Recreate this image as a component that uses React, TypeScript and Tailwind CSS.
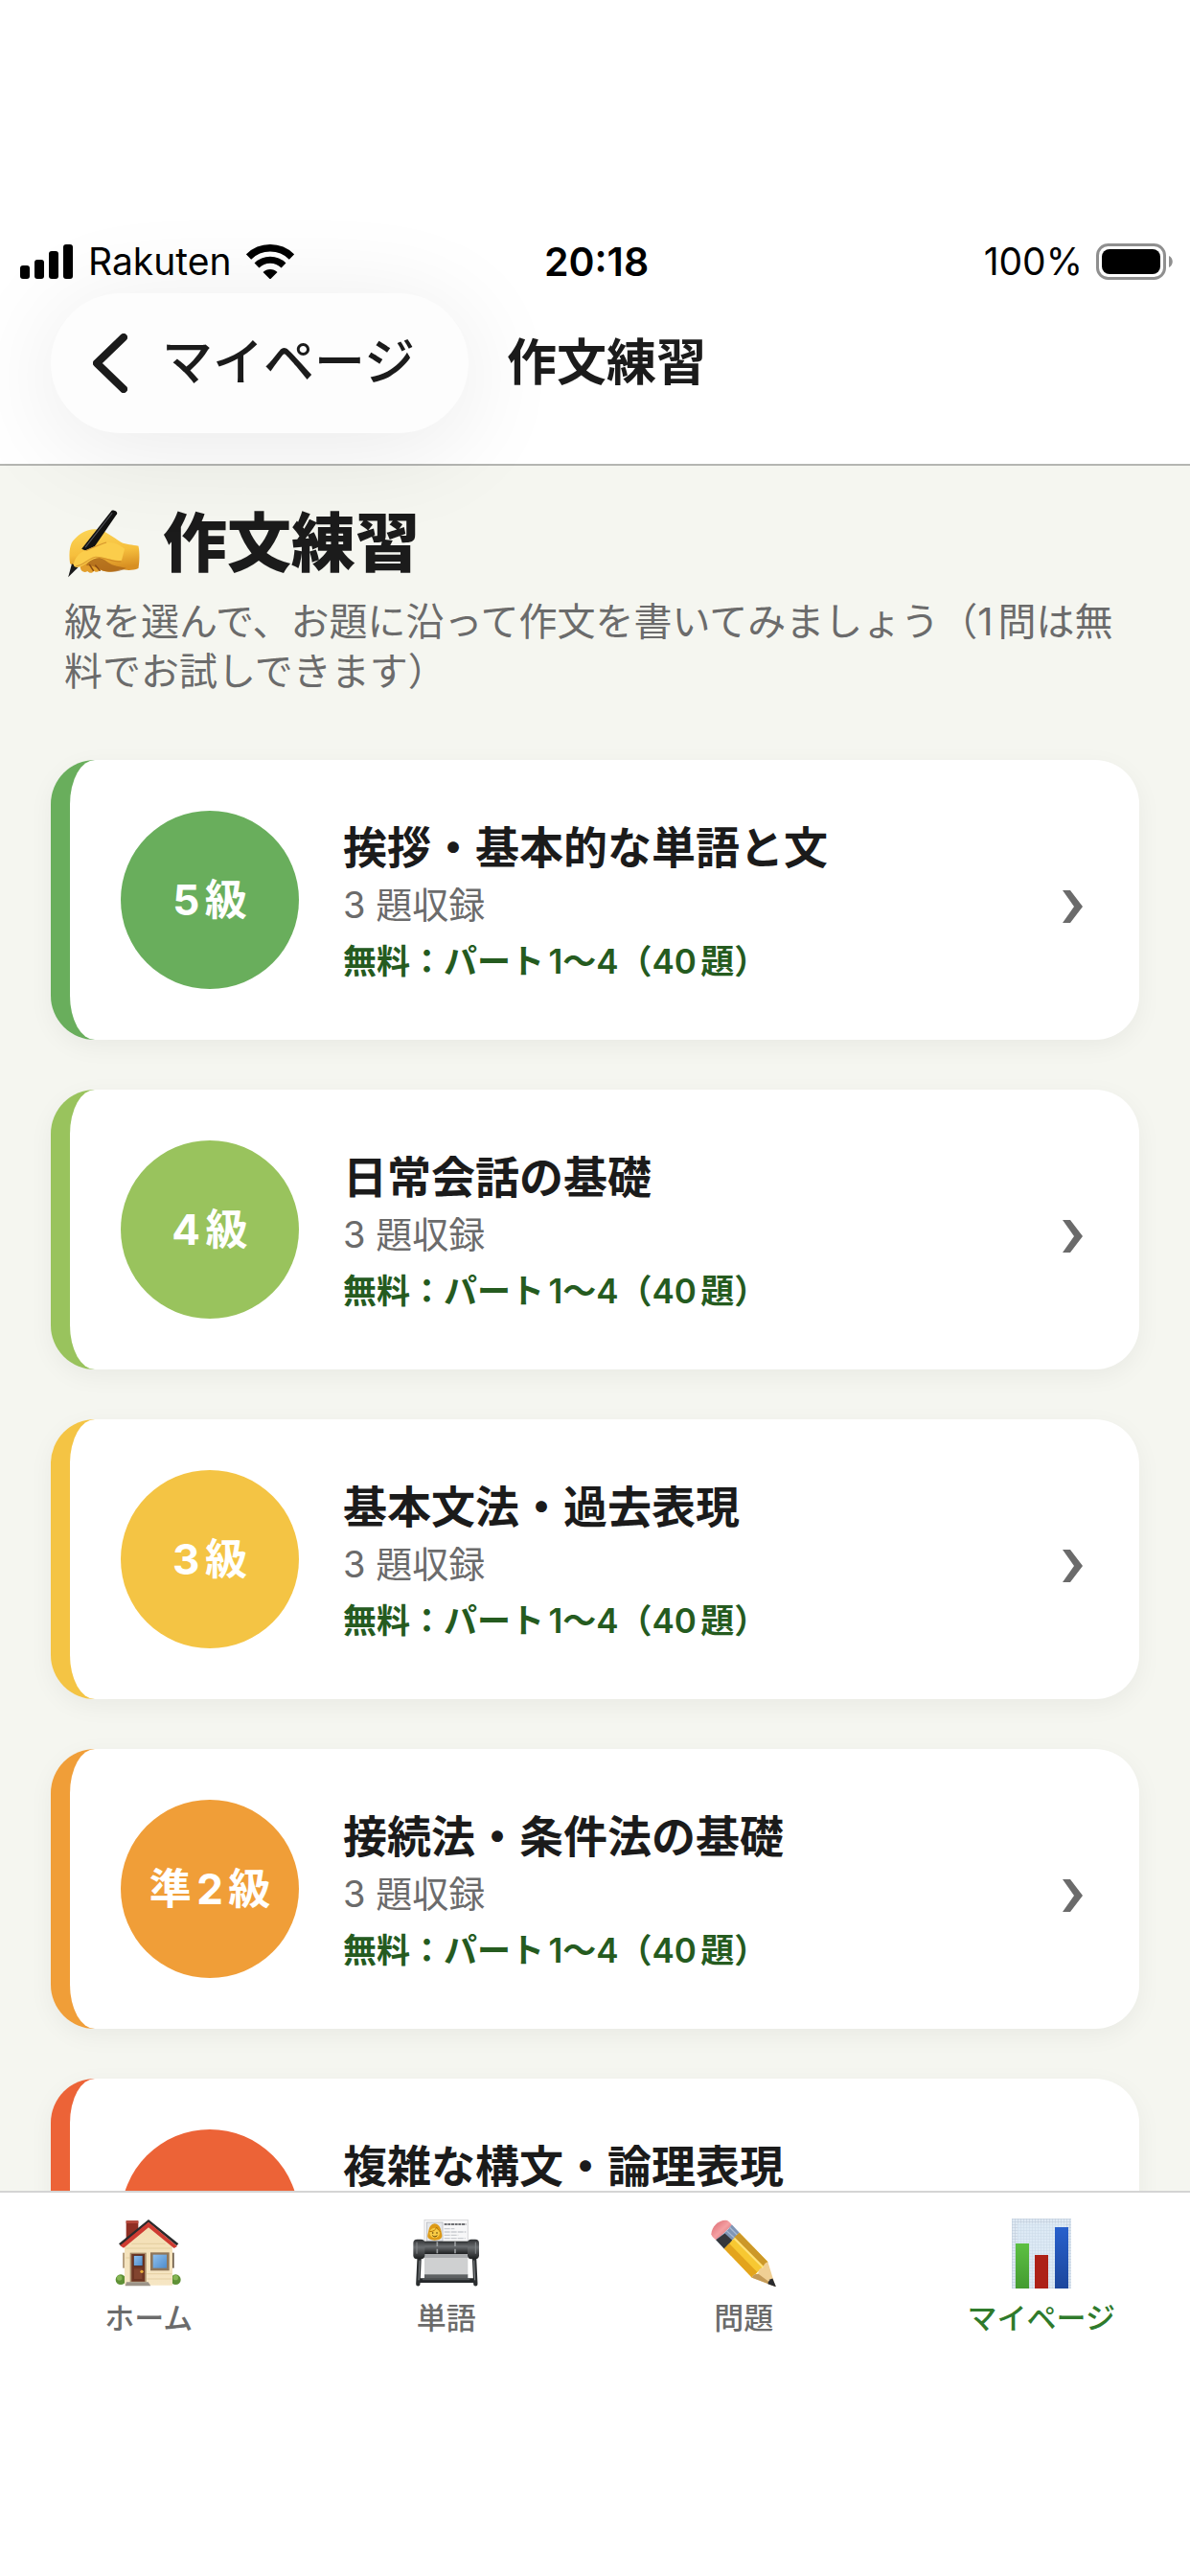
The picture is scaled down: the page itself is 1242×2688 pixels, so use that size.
import type { ReactNode } from "react";

type Level = {
  grade: string;
  title: string;
  border: string;
  circle: string;
};

const levels: Level[] = [
  { grade: "5級", title: "挨拶・基本的な単語と文", border: "border-[#69ae5c]", circle: "bg-[#69ae5c]" },
  { grade: "4級", title: "日常会話の基礎", border: "border-[#99c35d]", circle: "bg-[#99c35d]" },
  { grade: "3級", title: "基本文法・過去表現", border: "border-[#f4c444]", circle: "bg-[#f4c444]" },
  { grade: "準2級", title: "接続法・条件法の基礎", border: "border-[#f09e38]", circle: "bg-[#f09e38]" },
  { grade: "2級", title: "複雑な構文・論理表現", border: "border-[#ec6337]", circle: "bg-[#ec6337]" },
];

function SignalIcon() {
  return (
    <svg viewBox="0 0 55 36" className="h-9 w-[55px]" aria-hidden="true">
      <rect x="0" y="22" width="10" height="14" rx="3" />
      <rect x="15" y="16" width="10" height="20" rx="3" />
      <rect x="30" y="7" width="10" height="29" rx="3" />
      <rect x="45" y="0" width="10" height="36" rx="3" />
    </svg>
  );
}

function WifiIcon() {
  return (
    <svg viewBox="0 0 50 36" className="h-9 w-[50px]" aria-hidden="true">
      <path d="M2.5 13a32 32 0 0 1 45 0" fill="none" stroke="#000" strokeWidth="7.500" />
      <path d="M11 22a20 20 0 0 1 28 0" fill="none" stroke="#000" strokeWidth="7" />
      <path d="M25 36.500l-7.500-7.500a10.600 10.600 0 0 1 15 0z" />
    </svg>
  );
}

function BatteryIcon() {
  return (
    <svg viewBox="0 0 80 38" className="h-[38px] w-20" aria-hidden="true">
      <rect x="1.500" y="1.500" width="70" height="35" rx="11" fill="none" stroke="#8f8f8f" strokeWidth="3" />
      <rect x="6" y="6" width="61" height="26" rx="8" />
      <path d="M76 13c5 2 5 10 0 12z" fill="#8f8f8f" />
    </svg>
  );
}

function WritingHand() {
  return (
    <svg viewBox="-8 0 208 213" preserveAspectRatio="none" className="h-[71px] w-[79px]" aria-hidden="true">
      <defs>
        <linearGradient id="skin" x1="0" y1="0" x2="0.2" y2="1">
          <stop offset="0" stopColor="#fcd657" />
          <stop offset="0.6" stopColor="#f6bf3d" />
          <stop offset="1" stopColor="#d88f22" />
        </linearGradient>
      </defs>
      <path d="M36 180c2 14 12 18 20 12 6 8 14 6 18-1 6 6 14 4 18-4 10 6 22 6 34 0l12-12-40-40-60 10z" fill="#e39f2c" />
      <path d="M8 168C4 130 8 104 20 92 34 76 52 60 78 61c26 2 46 24 70 40 14 8 32 8 48 12 4 22 3 50 0 70-16 8-34 6-50 3-18 10-42 12-56 0-14-10-28-12-42-10-14 0-26 6-40-8z" fill="url(#skin)" />
      <path d="M70 152c16-6 30 0 42 12 14 12 34 14 50 18-18 12-50 18-72 4-12-8-24-12-38-12 6-10 10-18 18-22z" fill="#a8641a" opacity="0.75" />
      <path d="M62 172l10 18M78 174l12 16" stroke="#8a4c12" strokeWidth="4" strokeLinecap="round" />
      <path d="M3 211l10-42 18 10z" fill="#1a1a1c" />
      <path d="M40 122L122 3c4-4 18 2 15 10L64 134z" fill="#111" />
      <path d="M50 118L124 10" stroke="#55565c" strokeWidth="3" />
      <path d="M18 172c2-20 14-38 34-46 20-10 38-20 58-24 20-2 36 8 48 20l-8 36c-22 4-40-10-62-8-22 0-40 28-60 30-6 0-10-2-10-8z" fill="#fbcd4b" />
      <path d="M52 128c20-10 38-20 56-26" stroke="#c98222" strokeWidth="3" fill="none" opacity="0.7" />
      <path d="M24 176c20 0 34-24 54-28 24-2 40 14 70 14" stroke="#c4781c" strokeWidth="3" fill="none" opacity="0.6" />
    </svg>
  );
}

function HouseIcon() {
  return (
    <svg viewBox="0 0 210 210" className="size-[70px]" aria-hidden="true">
      <defs>
        <linearGradient id="wall" x1="0" y1="0" x2="0" y2="1">
          <stop offset="0" stopColor="#f3dfb4" />
          <stop offset="1" stopColor="#f6e6c4" />
        </linearGradient>
        <linearGradient id="pane" x1="0" y1="0" x2="1" y2="1">
          <stop offset="0" stopColor="#8fc0ee" />
          <stop offset="1" stopColor="#4f8ccb" />
        </linearGradient>
      </defs>
      <rect x="35" y="4" width="38" height="60" fill="#8f2f24" />
      <rect x="35" y="4" width="38" height="8" fill="#b5473a" />
      <rect x="24" y="104" width="6" height="48" fill="#b7a183" />
      <rect x="179" y="104" width="6" height="48" fill="#6e5c47" />
      <circle cx="18" cy="188" r="16" fill="#5f9136" />
      <circle cx="190" cy="188" r="16" fill="#5f9136" />
      <circle cx="14" cy="183" r="8" fill="#86b654" />
      <circle cx="190" cy="182" r="8" fill="#86b654" />
      <path d="M30 72L105 14l75 58v134H30z" fill="url(#wall)" />
      <path d="M34 90h142M34 120h12M100 170h78M100 186h78M52 76h106" stroke="#dcc594" strokeWidth="2" />
      <path d="M12 76L105 0l94 76-6 6L105 10 20 84z" fill="#2c2a2c" />
      <path d="M16 82l89-74 90 76-10 6-80-65-78 64z" fill="#cf3b32" />
      <rect x="47" y="104" width="51" height="92" fill="#a68a68" />
      <rect x="52" y="108" width="41" height="86" fill="#6e3523" />
      <rect x="58" y="113" width="29" height="32" fill="url(#pane)" stroke="#4e2417" strokeWidth="2" />
      <path d="M60 154h25v32H60z" fill="#82442f" />
      <circle cx="84" cy="163" r="5" fill="#e8ac3a" />
      <rect x="111" y="103" width="59" height="57" fill="#8f765a" />
      <rect x="119" y="110" width="43" height="42" fill="url(#pane)" />
      <path d="M36 196h68l8 12H32z" fill="#9c9489" />
    </svg>
  );
}

function PrinterIcon() {
  return (
    <svg viewBox="0 0 210 210" className="size-[70px]" aria-hidden="true">
      <defs>
        <linearGradient id="tube" x1="0" y1="0" x2="0" y2="1">
          <stop offset="0" stopColor="#2c2e30" />
          <stop offset="0.4" stopColor="#6b6e71" />
          <stop offset="1" stopColor="#1d1f20" />
        </linearGradient>
      </defs>
      <rect x="36" y="1" width="136" height="76" fill="#f7f7f8" stroke="#d5d6d8" strokeWidth="3" />
      <rect x="43" y="9" width="50" height="58" fill="#e5e7ea" stroke="#aeb2b8" strokeWidth="2" />
      <path d="M68 13c18 2 20 20 23 36 1 12-10 16-23 16S44 60 46 49c4-16 4-34 22-36z" fill="#dd9a16" />
      <circle cx="68" cy="42" r="16" fill="#f8cb45" />
      <path d="M52 38c12 0 20-6 22-14 4 8 8 12 12 14" stroke="#b87908" strokeWidth="3" fill="none" />
      <circle cx="62" cy="42" r="2.500" fill="#5b3a05" />
      <circle cx="75" cy="42" r="2.500" fill="#5b3a05" />
      <path d="M61 50c5 5 10 5 15 0" stroke="#5b3a05" strokeWidth="3" fill="none" />
      <path d="M98 15h68" stroke="#44474b" strokeWidth="5" strokeDasharray="9 2" />
      <path d="M98 29h32M98 39h68M98 49h44M98 59h66" stroke="#c9ccd0" strokeWidth="4" strokeDasharray="18 3" />
      <rect x="36" y="106" width="136" height="68" fill="#cfd0d1" />
      <rect x="36" y="106" width="136" height="14" fill="#a9abad" />
      <rect x="36" y="172" width="136" height="12" fill="#5e6163" />
      <path d="M18 184h174v14H18z" fill="#25282a" />
      <path d="M30 188h148" stroke="#6e7275" strokeWidth="2" />
      <path d="M20 118l-4 84M192 118l4 84" stroke="#2b2e30" strokeWidth="13" strokeLinecap="round" />
      <path d="M21 128l-3 62M191 128l3 62" stroke="#888c8f" strokeWidth="3" />
      <rect x="30" y="68" width="150" height="40" fill="url(#tube)" />
      <path d="M76 70v36M132 70v36" stroke="#9a9da0" strokeWidth="5" strokeDasharray="14 8" />
      <rect x="1" y="62" width="36" height="62" rx="12" fill="url(#tube)" />
      <rect x="171" y="62" width="36" height="62" rx="12" fill="url(#tube)" />
      <path d="M12 72v34M196 72v34" stroke="#85888b" strokeWidth="3" strokeLinecap="round" />
    </svg>
  );
}

function PencilIcon() {
  return (
    <svg viewBox="0 0 210 212" className="size-[70px]" aria-hidden="true">
      <defs>
        <linearGradient id="eraser" x1="0" y1="0" x2="1" y2="1">
          <stop offset="0" stopColor="#d9636a" />
          <stop offset="0.500" stopColor="#f4a0a3" />
          <stop offset="1" stopColor="#c95961" />
        </linearGradient>
      </defs>
      <path d="M3 46C4 22 26 2 48 2c8 0 14 6 20 16L20 66C12 60 4 54 3 46z" fill="url(#eraser)" />
      <path d="M68 16l24 26-48 50-26-28C26 58 58 34 68 16z" fill="#7f95b5" />
      <path d="M46 44l26 24-28 24-26-28z" fill="#35373c" />
      <path d="M52 36l26 24M62 26l24 24" stroke="#a8bad3" strokeWidth="4" />
      <path d="M92 42l90 92-50 50-88-92z" fill="#f7c832" />
      <path d="M92 42l90 92-14 14L76 56z" fill="#cc9829" />
      <path d="M60 76l88 90-16 18-88-92z" fill="#e3a41c" />
      <path d="M76 60l92 92" stroke="#ffe27a" strokeWidth="6" />
      <path d="M182 134l24 78-74-28c2-10 10-12 20-12-2-12 6-20 16-20 0-10 6-16 14-18z" fill="#f0cf94" />
      <path d="M152 172l54 40-74-28c2-8 8-12 20-12z" fill="#c49a57" />
      <path d="M197 186l11 27-26-9c0-8 6-16 15-18z" fill="#2a2b2e" />
    </svg>
  );
}

function ChartIcon() {
  return (
    <svg viewBox="0 0 62 73" className="h-[73px] w-[62px]" aria-hidden="true">
      <defs>
        <pattern id="grid" width="3" height="3" patternUnits="userSpaceOnUse">
          <rect width="3" height="3" fill="#dfe9f3" />
          <path d="M3 0H0v3" fill="none" stroke="#bccad9" strokeWidth="1" />
        </pattern>
        <linearGradient id="barBlue" x1="0" y1="0" x2="0" y2="1">
          <stop offset="0" stopColor="#2860cc" />
          <stop offset="1" stopColor="#1c469c" />
        </linearGradient>
        <linearGradient id="barGreen" x1="0" y1="0" x2="0" y2="1">
          <stop offset="0" stopColor="#5cc043" />
          <stop offset="1" stopColor="#449b30" />
        </linearGradient>
      </defs>
      <rect width="62" height="73" fill="url(#grid)" />
      <rect x="6" y="5" width="50" height="66" fill="#dcebf8" opacity="0.5" />
      <rect x="4" y="26" width="14" height="47" fill="url(#barGreen)" />
      <rect x="24" y="38" width="14" height="35" fill="#ad2117" />
      <rect x="45" y="9" width="14" height="64" fill="url(#barBlue)" />
    </svg>
  );
}

function BackChevron() {
  return (
    <svg viewBox="0 0 36 62" className="h-[62px] w-9" aria-hidden="true">
      <path d="M32 4L4 31l28 27" fill="none" stroke="#1b1b1b" strokeWidth="8" strokeLinecap="round" strokeLinejoin="round" />
    </svg>
  );
}

function RowChevron() {
  return (
    <svg viewBox="0 0 21 48" className="h-12 w-[21px] shrink-0" aria-hidden="true">
      <path d="M0 14h8l13 17L8 48H0l12-17z" fill="#6b6b6b" />
    </svg>
  );
}

function LevelCard({ grade, title, border, circle }: Level) {
  return (
    <li>
      <button
        type="button"
        className={`flex w-full items-center rounded-[46px] border-l-[20px] bg-white py-[53px] pr-[59px] pl-[53px] text-left shadow-[0_7px_26px_rgba(0,0,0,0.05)] ${border}`}
      >
        <span
          className={`flex size-[186px] shrink-0 items-center justify-center rounded-full text-[44px] font-bold text-white ${circle}`}
        >
          {grade}
        </span>
        <span className="ml-[46px] flex flex-1 flex-col pt-2">
          <span className="text-[46px] leading-[60px] font-bold text-[#1b1b1b]">{title}</span>
          <span className="text-[38px] leading-[60px] text-[#6b6b6b]">3 題収録</span>
          <span className="text-[35px] leading-[58px] font-semibold text-[#255b1f]">無料：パート1〜4（40題）</span>
        </span>
        <RowChevron />
      </button>
    </li>
  );
}

function Tab({ label, active = false, children }: { label: string; active?: boolean; children: ReactNode }) {
  return (
    <a
      href="#"
      aria-current={active ? "page" : undefined}
      className={`flex flex-col items-center gap-2 text-[31px] leading-[46px] font-medium ${active ? "text-[#2f7a2b]" : "text-[#6b6b6b]"}`}
    >
      <span className="flex h-[74px] items-center">{children}</span>
      {label}
    </a>
  );
}

export default function App() {
  return (
    <div
      lang="ja"
      className="flex h-screen flex-col overflow-hidden bg-white font-['Inter','Noto_Sans_CJK_JP',sans-serif] [text-autospace:normal]"
    >
      <header className="relative z-10 border-b-2 border-[#b4b5b2] bg-white pt-[249px] pb-[32px]">
        <div className="grid grid-cols-3 items-center pr-[18px] pl-[21px] text-[39px] leading-[48px] text-black">
          <div className="flex items-center gap-4">
            <SignalIcon />
            <span>Rakuten</span>
            <WifiIcon />
          </div>
          <span className="text-center text-[41px] font-semibold">20:18</span>
          <div className="flex items-center justify-end gap-3.5">
            <span>100%</span>
            <BatteryIcon />
          </div>
        </div>
        <div className="mt-[9px] flex items-center gap-10 px-[53px]">
          <button
            type="button"
            className="flex h-[146px] items-center gap-9 rounded-full bg-[#fdfdfd] pr-[56px] pl-11 text-[53px] font-medium text-[#1b1b1b] shadow-[0_14px_110px_rgba(0,0,0,0.09)]"
          >
            <BackChevron />
            マイページ
          </button>
          <p className="text-[52px] font-bold text-[#1b1b1b]">作文練習</p>
        </div>
      </header>

      <main className="min-h-0 flex-1 overflow-hidden bg-[#f5f6f0] px-[53px] pt-[33px]">
        <div className="px-[14px]">
          <h1 className="flex items-center gap-6 text-[67px] leading-[96px] font-black text-[#1b1b1b]">
            <WritingHand />
            作文練習
          </h1>
          <p className="mt-2 text-[40px] leading-[52px] text-[#6b6b6b]">
            級を選んで、お題に沿って作文を書いてみましょう（1問は無料でお試しできます）
          </p>
        </div>
        <ul className="mt-[66px] flex flex-col gap-[52px]">
          {levels.map((level) => (
            <LevelCard key={level.grade} {...level} />
          ))}
        </ul>
      </main>

      <nav className="grid grid-cols-4 border-t-2 border-[#d4d4d4] bg-white pt-[26px] pb-[246px]">
        <Tab label="ホーム">
          <HouseIcon />
        </Tab>
        <Tab label="単語">
          <PrinterIcon />
        </Tab>
        <Tab label="問題">
          <PencilIcon />
        </Tab>
        <Tab label="マイページ" active>
          <ChartIcon />
        </Tab>
      </nav>
    </div>
  );
}
